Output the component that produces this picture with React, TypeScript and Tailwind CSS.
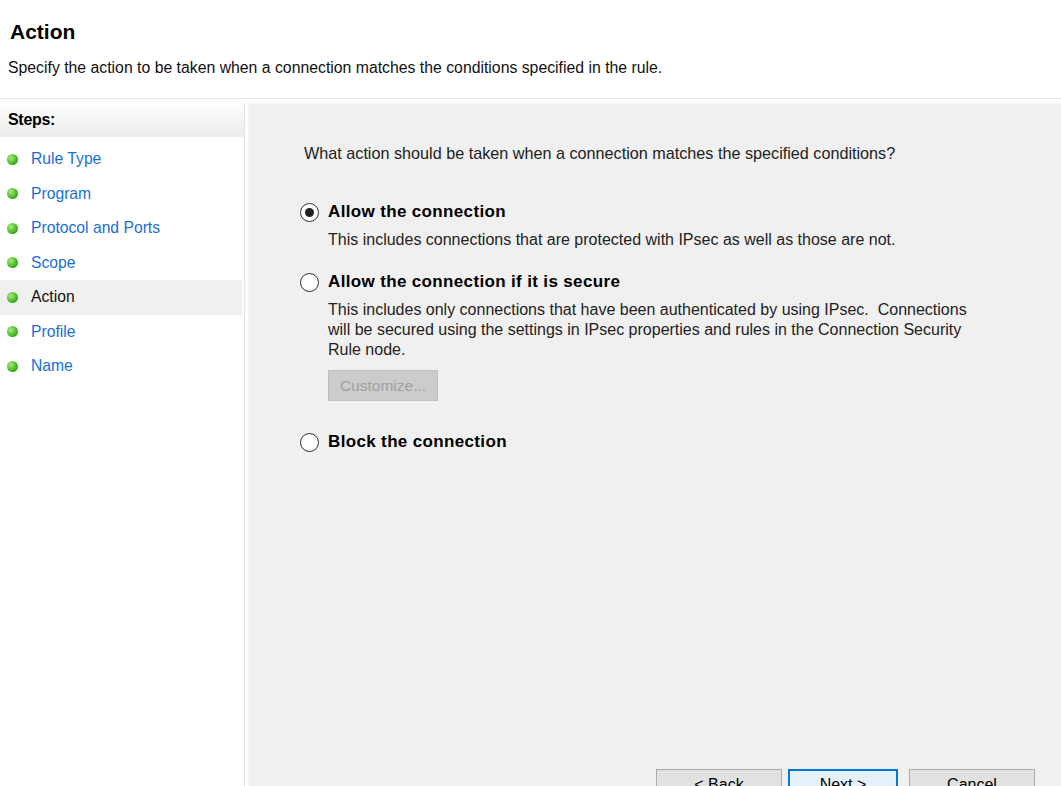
const steps = ['Rule Type', 'Program', 'Protocol and Ports', 'Scope', 'Action', 'Profile', 'Name']

const Dot = () => (
  <span className="w-[11px] h-[11px] rounded-full shrink-0 bg-[radial-gradient(circle_at_35%_35%,#a6ec7c,#3fb51f_60%,#2a8a12)]"></span>
)

const Radio = ({ checked }: { checked?: boolean }) => (
  <span className="w-[19px] h-[19px] rounded-full border-[1.5px] border-[#333] bg-white flex items-center justify-center shrink-0">
    {checked && <span className="w-[9px] h-[9px] rounded-full bg-[#222]"></span>}
  </span>
)

const Option = ({ label, checked, children }: { label: string; checked?: boolean; children?: React.ReactNode }) => (
  <div className="flex flex-col">
    <div className="flex items-center gap-[9px] h-[22px]">
      <Radio checked={checked} />
      <span className="text-[17px] font-bold text-black tracking-[0.35px]">{label}</span>
    </div>
    {children && <div className="pl-[28px] mt-[7px] text-[16px] leading-[20px] text-[#222]">{children}</div>}
  </div>
)

export default function App() {
  return (
    <div className="w-[1061px] h-[786px] bg-white overflow-hidden flex flex-col font-['Liberation_Sans',Arial,sans-serif]">
      <div className="h-[99px] shrink-0 pl-[10px] pt-[19px] border-b border-[#e6e6e6]">
        <h1 className="text-[21px] font-bold text-black leading-[26px]">Action</h1>
        <p className="text-[15.8px] text-[#111] mt-[14px] -ml-[2px] leading-[18px]">
          Specify the action to be taken when a connection matches the conditions specified in the rule.
        </p>
      </div>
      <div className="flex flex-1 pt-[4px]">
        <div className="w-[245px] shrink-0 border-r border-[#e3e3e3] flex flex-col">
          <div className="h-[34px] flex items-center pl-[8px] bg-gradient-to-b from-white to-[#ececec] text-[16px] font-bold text-black tracking-[-0.3px]">
            Steps:
          </div>
          <div className="flex flex-col pt-[5px]">
            {steps.map((s) => (
              <div
                key={s}
                className={`h-[34.5px] flex items-center gap-[13px] pl-[7px] mr-[2px] ${s === 'Action' ? 'bg-[#f0f0f0] text-[#111]' : 'text-[#1a6fd6]'}`}
              >
                <Dot />
                <span className="text-[15.7px]">{s}</span>
              </div>
            ))}
          </div>
        </div>
        <div className="flex-1 ml-[3px] bg-[#f0f0f0] border-t border-l border-[#f7f7f7] pl-[55px] pt-[39px] flex flex-col">
          <p className="text-[16.2px] text-[#222] leading-[20px]">
            What action should be taken when a connection matches the specified conditions?
          </p>
          <div className="mt-[38px] -ml-[4px] flex flex-col">
            <Option label="Allow the connection" checked>
              This includes connections that are protected with IPsec as well as those are not.
            </Option>
            <div className="mt-[21px]">
              <Option label="Allow the connection if it is secure">
                <div className="w-[648px]">
                  This includes only connections that have been authenticated by using IPsec.&nbsp; Connections will be secured using the settings in IPsec properties and rules in the Connection Security Rule node.
                </div>
                <div className="mt-[10px] w-[110px] h-[31px] bg-[#cccccc] border border-[#bfbfbf] flex items-center justify-center text-[15.5px] text-[#a0a0a0]">
                  Customize...
                </div>
              </Option>
            </div>
            <div className="mt-[30px]">
              <Option label="Block the connection" />
            </div>
          </div>
          <div className="mt-auto flex justify-end pr-[26px] gap-[6px] translate-y-[15px]">
            <div className="w-[126px] h-[32px] bg-[#e1e1e1] border border-[#adadad] flex items-center justify-center text-[16px] text-black">&lt; Back</div>
            <div className="w-[110px] h-[32px] bg-[#e5f1fb] border-2 border-[#0078d7] flex items-center justify-center text-[16px] text-black">Next &gt;</div>
            <div className="w-[126px] h-[32px] ml-[5px] bg-[#e1e1e1] border border-[#adadad] flex items-center justify-center text-[16px] text-black">Cancel</div>
          </div>
        </div>
      </div>
    </div>
  )
}
